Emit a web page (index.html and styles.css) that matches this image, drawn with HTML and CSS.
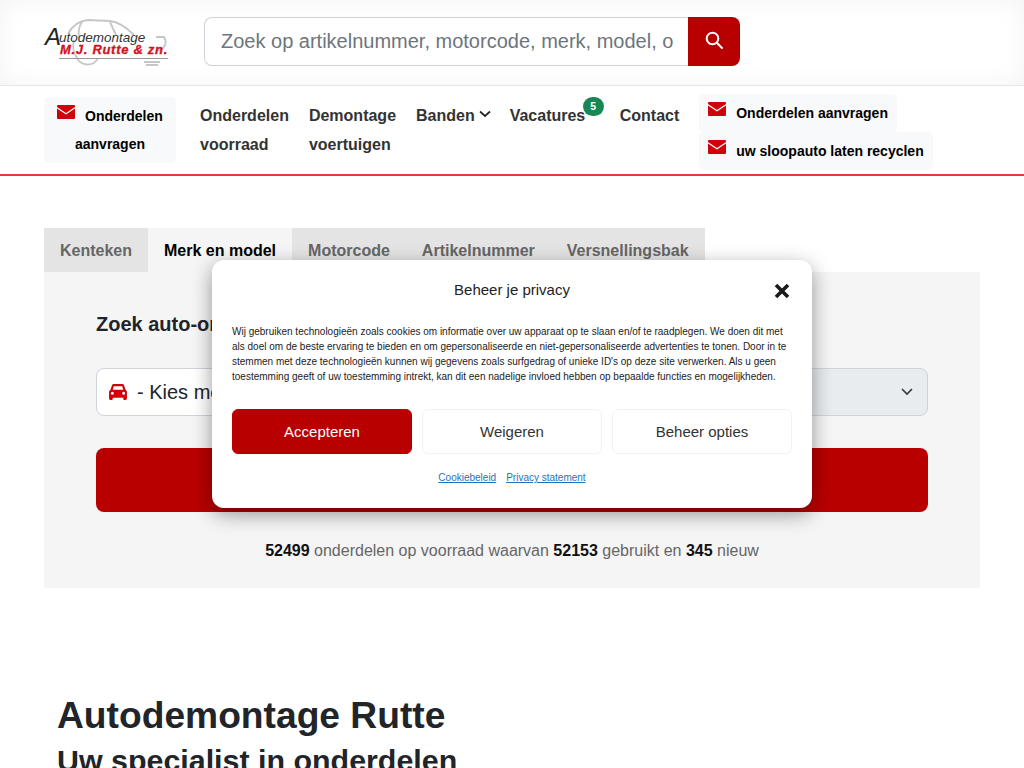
FILE: index.html
```html
<!DOCTYPE html>
<html lang="nl">

<head>
    <meta charset="UTF-8">
    <meta name="viewport" content="width=device-width, initial-scale=1.0">
    <title>Autodemontage Rutte</title>
    <link rel="stylesheet" href="styles.css">
</head>

<body>
    <header class="top-bar">
        <a class="logo" href="#">
            <svg class="logo-car" width="124" height="50" viewBox="0 0 124 50" fill="none" stroke="#c6c6c6" stroke-width="1.800">
                <path d="M24 16 C28 8 34 3 44 2 L66 3 C76 4 84 11 90 17" />
                <path d="M38 4 C34 10 34 14 35 19 M66 4 L72 17" />
                <path d="M32 38 C36 49 50 49 54 40" />
                <path d="M30 22 C28 30 30 36 33 40" />
                <path d="M112 19 L120 19 C123 24 122 29 116 32 L112 32" />
                <path d="M100 44 L116 44 M102 47 L114 47" />
            </svg>
            <span class="logo-a">A</span>
            <span class="logo-name">utodemontage</span>
            <span class="logo-firm">M.J. Rutte &amp; zn.</span>
            <span class="logo-rule"></span>
        </a>
        <form class="search">
            <input class="search-input" type="text" placeholder="Zoek op artikelnummer, motorcode, merk, model, of trefwoord">
            <button class="search-btn" type="button" aria-label="Zoeken">
                <svg width="18" height="18" viewBox="0 0 18 18" fill="none" stroke="#fff" stroke-width="2">
                    <circle cx="7.5" cy="7.5" r="5.8" />
                    <path d="M11.8 11.8 L17 17" stroke-linecap="round" />
                </svg>
            </button>
        </form>
    </header>

    <nav class="main-nav">
        <a class="request-box" href="#">
            <svg class="mail" width="18" height="14" viewBox="0 0 18 14"><path d="M0 1 Q0 0 1 0 H17 Q18 0 18 1 V2 L9 8 L0 2 Z M0 3.6 L9 9.6 L18 3.6 V13 Q18 14 17 14 H1 Q0 14 0 13 Z" /></svg>
            Onderdelen<br>aanvragen
        </a>
        <a class="nav-link" href="#">Onderdelen<br>voorraad</a>
        <a class="nav-link" href="#">Demontage<br>voertuigen</a>
        <a class="nav-link" href="#">Banden
            <svg class="chevron" width="12" height="8" viewBox="0 0 12 8" fill="none" stroke="#212529" stroke-width="1.700"><path d="M1 1.500 L6 6 L11 1.500" /></svg>
        </a>
        <a class="nav-link vacatures" href="#">Vacatures<span class="badge">5</span></a>
        <a class="nav-link contact" href="#">Contact</a>
        <div class="request-stack">
            <a class="request-line" href="#">
                <svg class="mail" width="18" height="14" viewBox="0 0 18 14"><path d="M0 1 Q0 0 1 0 H17 Q18 0 18 1 V2 L9 8 L0 2 Z M0 3.6 L9 9.6 L18 3.6 V13 Q18 14 17 14 H1 Q0 14 0 13 Z" /></svg>
                Onderdelen aanvragen
            </a>
            <a class="request-line" href="#">
                <svg class="mail" width="18" height="14" viewBox="0 0 18 14"><path d="M0 1 Q0 0 1 0 H17 Q18 0 18 1 V2 L9 8 L0 2 Z M0 3.6 L9 9.6 L18 3.6 V13 Q18 14 17 14 H1 Q0 14 0 13 Z" /></svg>
                uw sloopauto laten recyclen
            </a>
        </div>
    </nav>

    <main class="content">
        <div class="tabs">
            <a class="tab" href="#">Kenteken</a>
            <a class="tab active" href="#">Merk en model</a>
            <a class="tab" href="#">Motorcode</a>
            <a class="tab" href="#">Artikelnummer</a>
            <a class="tab" href="#">Versnellingsbak</a>
        </div>
        <section class="panel">
            <h2 class="panel-title">Zoek auto-onderdelen</h2>
            <div class="selects">
                <div class="select">
                    <svg class="car" width="18" height="16" viewBox="0 0 19 17"><path d="M5 0 H14 Q15.500 0 16 1.500 L17.500 6 Q19 7 19 8.500 V15.500 Q19 17 17.500 17 H16 Q15 17 15 15.500 V14.500 H4 V15.500 Q4 17 3 17 H1.500 Q0 17 0 15.500 V8.500 Q0 7 1.500 6 L3 1.500 Q3.500 0 5 0 Z M5 2.300 L3.900 6 H15.100 L14 2.300 Z M3.500 8.300 A1.600 1.600 0 1 0 3.500 11.500 A1.600 1.600 0 1 0 3.500 8.300 Z M15.500 8.300 A1.600 1.600 0 1 0 15.500 11.500 A1.600 1.600 0 1 0 15.500 8.300 Z" fill-rule="evenodd" /></svg>
                    - Kies merk -
                </div>
                <div class="select disabled">
                    - Kies model -
                    <svg class="select-arrow" width="12" height="8" viewBox="0 0 12 8" fill="none" stroke="#343a40" stroke-width="1.700"><path d="M1.500 1.500 L6 6 L10.500 1.500" stroke-linecap="round" /></svg>
                </div>
            </div>
            <button class="submit" type="button">Zoeken</button>
            <p class="stock"><b>52499</b> onderdelen op voorraad waarvan <b>52153</b> gebruikt en <b>345</b> nieuw</p>
        </section>

        <h1 class="page-title">Autodemontage Rutte</h1>
        <h2 class="page-sub">Uw specialist in onderdelen</h2>
    </main>

    <div class="cookie-modal">
        <div class="cookie-head">
            <span class="cookie-title">Beheer je privacy</span>
            <svg class="cookie-close" width="16" height="16" viewBox="0 0 16 16" stroke="#1a1a1a" stroke-width="3.600"><path d="M2 2 L14 14 M14 2 L2 14" /></svg>
        </div>
        <p class="cookie-text">Wij gebruiken technologieën zoals cookies om informatie over uw apparaat op te slaan en/of te raadplegen. We doen dit met als doel om de beste ervaring te bieden en om gepersonaliseerde en niet-gepersonaliseerde advertenties te tonen. Door in te stemmen met deze technologieën kunnen wij gegevens zoals surfgedrag of unieke ID's op deze site verwerken. Als u geen toestemming geeft of uw toestemming intrekt, kan dit een nadelige invloed hebben op bepaalde functies en mogelijkheden.</p>
        <div class="cookie-buttons">
            <button class="cookie-btn accept" type="button">Accepteren</button>
            <button class="cookie-btn" type="button">Weigeren</button>
            <button class="cookie-btn" type="button">Beheer opties</button>
        </div>
        <div class="cookie-links">
            <a href="#">Cookiebeleid</a>
            <a href="#">Privacy statement</a>
        </div>
    </div>
</body>

</html>
```
FILE: styles.css
```css
html,
body {
    height: 768px;
    overflow: hidden;
}

body {
    margin: 0;
    font-family: "Liberation Sans", Arial, sans-serif;
    color: #212529;
    background-color: #fff;
    position: relative;
}

a {
    text-decoration: none;
    color: inherit;
}

/* top bar */
.top-bar {
    display: flex;
    align-items: center;
    height: 85px;
    padding: 0 44px;
    box-sizing: content-box;
    border-bottom: 1px solid #e6e6e6;
    background-color: #fff;
    box-shadow: inset 0 0 24px rgba(0, 0, 0, 0.05);
}

.logo {
    position: relative;
    display: block;
    width: 124px;
    height: 50px;
    margin-top: 1px;
    flex: none;
}

.logo-car {
    position: absolute;
    left: 0;
    top: 0;
}

.logo-a {
    position: absolute;
    left: 1px;
    top: 5px;
    font-size: 24px;
    font-style: italic;
    color: #222;
}

.logo-name {
    position: absolute;
    left: 15px;
    top: 12px;
    font-size: 13.500px;
    font-style: italic;
    color: #333;
}

.logo-firm {
    position: absolute;
    left: 16px;
    top: 24px;
    font-size: 13px;
    font-weight: bold;
    font-style: italic;
    letter-spacing: 0.700px;
    color: #d0121b;
    white-space: nowrap;
    -webkit-text-stroke: 0.300px #d0121b;
}

.logo-rule {
    position: absolute;
    left: 15px;
    right: 0;
    top: 40px;
    height: 1px;
    background-color: #999;
}

.search {
    display: flex;
    width: 536px;
    height: 49px;
    margin-left: 36px;
    margin-top: -2px;
}

.search-input {
    flex: 1;
    min-width: 0;
    box-sizing: border-box;
    padding: 0 15px 0 16px;
    border: 1px solid #ced4da;
    border-right: none;
    border-radius: 8px 0 0 8px;
    background-color: #fff;
    font-family: inherit;
    font-size: 20px;
    color: #6c757d;
}

.search-input::placeholder {
    color: #6c757d;
    opacity: 1;
}

.search-btn {
    width: 52px;
    display: flex;
    align-items: center;
    justify-content: center;
    padding: 0 0 4px;
    border: none;
    border-radius: 0 8px 8px 0;
    background-color: #b90000;
}

/* nav */
.main-nav {
    display: flex;
    align-items: flex-start;
    height: 88px;
    padding: 0 44px;
    border-bottom: 2px solid #f33434;
    font-weight: bold;
}

.mail {
    fill: #d0000b;
}

.request-box {
    box-sizing: border-box;
    width: 132px;
    height: 66px;
    margin-top: 11px;
    padding-top: 5px;
    border-radius: 5px;
    background-color: #f8f9fa;
    font-size: 14px;
    line-height: 28px;
    text-align: center;
    color: #000;
}

.request-box .mail {
    vertical-align: 2px;
    margin-right: 6px;
}

.nav-link {
    margin: 15px 0 0 24px;
    font-size: 16px;
    line-height: 29px;
    color: #333;
    position: relative;
}

.nav-link + .nav-link {
    margin-left: 20px;
}

.chevron {
    margin-left: 0;
    vertical-align: 3px;
}

.nav-link.vacatures {
    margin-left: 18.500px;
}

.nav-link.contact {
    margin-left: 34.500px;
}

.badge {
    position: absolute;
    left: 73px;
    top: -4px;
    width: 21px;
    height: 19px;
    border-radius: 10px;
    background-color: #198754;
    color: #fff;
    font-size: 10.500px;
    line-height: 18px;
    text-align: center;
}

.request-stack {
    margin: 8px 0 0 20px;
    display: flex;
    flex-direction: column;
    align-items: flex-start;
}

.request-line {
    height: 38px;
    padding: 0 9px;
    border-radius: 5px;
    background-color: #f8f9fa;
    font-size: 14px;
    line-height: 38px;
    color: #000;
}

.request-line .mail {
    margin-right: 6px;
    vertical-align: 2px;
}

/* tabs + search panel */
.content {
    padding: 52px 44px 0;
}

.tabs {
    display: flex;
}

.tab {
    padding: 0 16px;
    height: 44px;
    background-color: #e4e4e4;
    font-size: 16px;
    font-weight: bold;
    line-height: 45px;
    color: #666;
}

.tab.active {
    background-color: #f5f5f5;
    color: #000;
}

.panel {
    box-sizing: border-box;
    height: 316px;
    padding: 40px 52px 0;
    background-color: #f5f5f5;
}

.panel-title {
    margin: 0;
    font-size: 20px;
    line-height: 24px;
    color: #212529;
}

.selects {
    display: grid;
    grid-template-columns: 1fr 1fr;
    gap: 16px;
    margin-top: 32px;
}

.select {
    display: flex;
    align-items: center;
    box-sizing: border-box;
    height: 48px;
    padding: 0 12px;
    border: 1px solid #ced4da;
    border-radius: 8px;
    background-color: #fff;
    font-size: 20px;
}

.select.disabled {
    background-color: #e9ecef;
}

.car {
    fill: #d0000b;
    margin-right: 10px;
}

.select-arrow {
    margin-left: auto;
    margin-right: 2px;
}

.submit {
    display: block;
    width: 100%;
    height: 64px;
    margin-top: 32px;
    border: none;
    border-radius: 8px;
    background-color: #b90000;
    color: #fff;
    font-family: inherit;
    font-size: 20px;
    font-weight: bold;
}

.stock {
    margin: 29px 0 0;
    font-size: 16px;
    line-height: 19px;
    text-align: center;
    color: #666;
}

.stock b {
    color: #111;
}

.page-title {
    margin: 104px 0 0 13px;
    font-size: 37.200px;
    line-height: 46px;
    color: #212529;
}

.page-sub {
    margin: 2px 0 0 13px;
    font-size: 30.400px;
    line-height: 40px;
    color: #212529;
}

/* cookie modal */
.cookie-modal {
    position: absolute;
    left: 212px;
    top: 260px;
    box-sizing: border-box;
    width: 600px;
    height: 248px;
    padding: 20px;
    border-radius: 12px;
    background-color: #fff;
    box-shadow: 0 6px 20px rgba(0, 0, 0, 0.4);
}

.cookie-head {
    position: relative;
    height: 20px;
    text-align: center;
}

.cookie-title {
    font-size: 15px;
    line-height: 20px;
    color: #222;
}

.cookie-close {
    position: absolute;
    right: 2px;
    top: 3px;
}

.cookie-text {
    margin: 24px 0 0;
    font-size: 10px;
    line-height: 15px;
    color: #222;
}

.cookie-buttons {
    display: grid;
    grid-template-columns: repeat(3, 1fr);
    gap: 10px;
    margin-top: 25px;
}

.cookie-btn {
    height: 45px;
    border: 1px solid #f2f2f2;
    border-radius: 6px;
    background-color: #fff;
    font-family: inherit;
    font-size: 15px;
    color: #333;
}

.cookie-btn.accept {
    border-color: #b90000;
    background-color: #b90000;
    color: #fff;
}

.cookie-links {
    display: flex;
    justify-content: center;
    gap: 10px;
    margin-top: 17px;
    font-size: 10px;
    line-height: 14px;
}

.cookie-links a {
    color: #1e73be;
    text-decoration: underline;
}
```
